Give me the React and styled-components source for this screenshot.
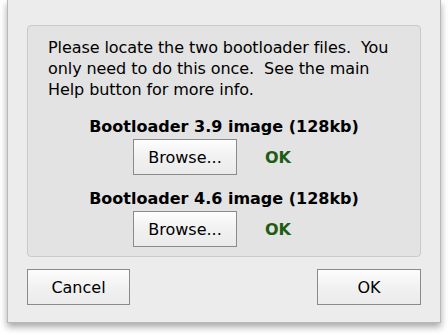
import React from 'react';
import styled, { createGlobalStyle } from 'styled-components';

const GlobalStyle = createGlobalStyle`
  html, body {
    margin: 0;
    padding: 0;
    background: #ffffff;
  }
  body {
    font-family: "DejaVu Sans", "Liberation Sans", sans-serif;
    color: #000000;
  }
`;

const Page = styled.div`
  width: 448px;
  height: 335px;
  padding: 0 7px 12px 7px;
  box-sizing: border-box;
  overflow: hidden;
`;

const Window = styled.div`
  width: 434px;
  height: 323px;
  box-sizing: border-box;
  background: #ececec;
  border: 1px solid #b9b9b9;
  border-top: none;
  box-shadow: 0 4px 7px rgba(0, 0, 0, 0.35);
  padding: 25px 19px 0 19px;
  display: flex;
  flex-direction: column;
`;

const Panel = styled.div`
  height: 232px;
  box-sizing: border-box;
  background: #e3e3e3;
  border: 1px solid #cacaca;
  border-radius: 4px;
  padding: 11px 20px 0 20px;
  display: flex;
  flex-direction: column;
`;

const Message = styled.p`
  margin: 0;
  font-size: 16px;
  line-height: 21px;
  letter-spacing: -0.08px;
`;

const Title = styled.div`
  margin-top: ${(p) => p.$top}px;
  text-align: center;
  font-weight: bold;
  font-size: 16px;
  line-height: 20px;
`;

const FileRow = styled.div`
  margin-top: 2px;
  display: flex;
  align-items: center;
  padding-left: 85px;
  gap: 28px;
`;

const Button = styled.button`
  width: ${(p) => p.$width}px;
  height: 36px;
  box-sizing: border-box;
  border: 1px solid #8a8a8a;
  border-radius: 0;
  background: linear-gradient(#fdfdfd, #f1f1f1 50%, #ebebeb);
  font-family: "DejaVu Sans", "Liberation Sans", sans-serif;
  font-size: 16px;
  color: #000000;
  padding: 0;
`;

const Status = styled.span`
  color: #1d5c14;
  font-weight: bold;
  font-size: 16px;
`;

const Footer = styled.div`
  margin-top: 12px;
  display: flex;
  justify-content: space-between;
`;

const files = [
  { label: 'Bootloader 3.9 image (128kb)', top: 17 },
  { label: 'Bootloader 4.6 image (128kb)', top: 14 },
];

export default function App() {
  return (
    <Page>
      <GlobalStyle />
      <Window>
        <Panel>
          <Message>
            Please locate the two bootloader files.&nbsp; You only need to do
            this once.&nbsp; See the main Help button for more info.
          </Message>
          {files.map((f) => (
            <React.Fragment key={f.label}>
              <Title $top={f.top}>{f.label}</Title>
              <FileRow>
                <Button $width={104}>Browse...</Button>
                <Status>OK</Status>
              </FileRow>
            </React.Fragment>
          ))}
        </Panel>
        <Footer>
          <Button $width={103}>Cancel</Button>
          <Button $width={104}>OK</Button>
        </Footer>
      </Window>
    </Page>
  );
}
